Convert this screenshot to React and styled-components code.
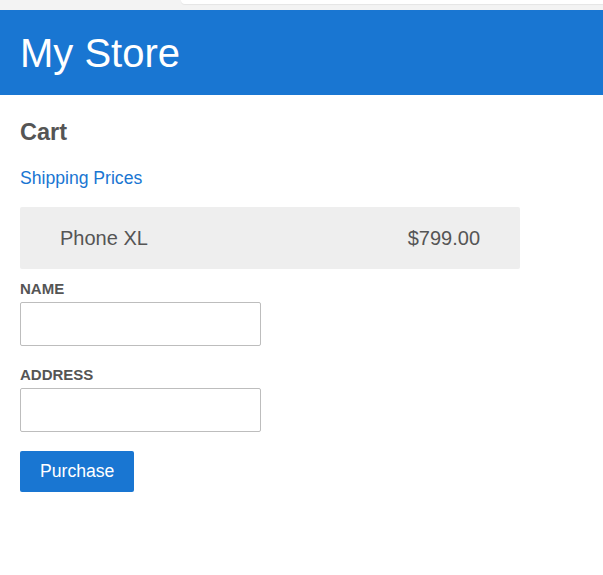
import styled, { createGlobalStyle } from 'styled-components';

const GlobalStyle = createGlobalStyle`
  html, body {
    margin: 0;
    padding: 0;
    background: #fff;
    font-family: "Liberation Sans", Arial, sans-serif;
  }
`;

const ChromeStrip = styled.div`
  height: 10px;
  background: #f3f3f3;
  position: relative;
`;

const ChromeTab = styled.div`
  position: absolute;
  left: 181px;
  right: 0;
  top: 0;
  height: 4px;
  background: #fff;
  border-bottom-left-radius: 4px;
  box-shadow: 0 1px 1px rgba(0, 0, 0, 0.06);
`;

const TopBar = styled.header`
  height: 85px;
  background: #1976d2;
  display: flex;
  align-items: center;
  padding: 0 20px;
`;

const Brand = styled.h1`
  margin: 0;
  color: #fff;
  font-size: 40px;
  font-weight: 400;
  line-height: 1;
`;

const Content = styled.main`
  padding: 23px 20px 0;
  display: flex;
  flex-direction: column;
  align-items: flex-start;
`;

const Title = styled.h2`
  margin: 0;
  font-size: 23.5px;
  font-weight: 700;
  color: #555;
  line-height: 28px;
`;

const ShippingLink = styled.a`
  margin-top: 22px;
  font-size: 17.6px;
  line-height: 20px;
  color: #1976d2;
  text-decoration: none;
`;

const CartItem = styled.div`
  box-sizing: border-box;
  margin-top: 19px;
  width: 500px;
  height: 62px;
  padding: 0 40px;
  background: #eee;
  border-radius: 2px;
  display: flex;
  align-items: center;
  justify-content: space-between;
  color: #555;
  font-size: 20px;
`;

const Form = styled.form`
  display: flex;
  flex-direction: column;
  align-items: flex-start;
  margin-top: 11px;
`;

const Field = styled.div`
  display: flex;
  flex-direction: column;
  margin-bottom: ${(p) => p.$gap || 0}px;
`;

const Label = styled.label`
  font-size: 15px;
  font-weight: 700;
  color: #555;
  line-height: 18px;
  margin-bottom: 4px;
  text-transform: uppercase;
`;

const Input = styled.input`
  box-sizing: border-box;
  width: 241px;
  height: 44px;
  border: 1px solid #bdbdbd;
  border-radius: 2px;
  padding: 0 10px;
  font-size: 16px;
  font-family: inherit;
  outline: none;
`;

const Button = styled.button`
  box-sizing: border-box;
  height: 41px;
  padding: 0 20px;
  border: 0;
  border-radius: 2px;
  background: #1976d2;
  color: #fff;
  font-family: inherit;
  font-size: 17.6px;
  cursor: pointer;
`;

export default function App() {
  return (
    <>
      <GlobalStyle />
      <ChromeStrip>
        <ChromeTab />
      </ChromeStrip>
      <TopBar>
        <Brand>My Store</Brand>
      </TopBar>
      <Content>
        <Title>Cart</Title>
        <ShippingLink href="#">Shipping Prices</ShippingLink>
        <CartItem>
          <span>Phone XL</span>
          <span>$799.00</span>
        </CartItem>
        <Form onSubmit={(e) => e.preventDefault()}>
          <Field $gap={20}>
            <Label htmlFor="name">Name</Label>
            <Input id="name" type="text" />
          </Field>
          <Field $gap={19}>
            <Label htmlFor="address">Address</Label>
            <Input id="address" type="text" />
          </Field>
          <Button type="submit">Purchase</Button>
        </Form>
      </Content>
    </>
  );
}
